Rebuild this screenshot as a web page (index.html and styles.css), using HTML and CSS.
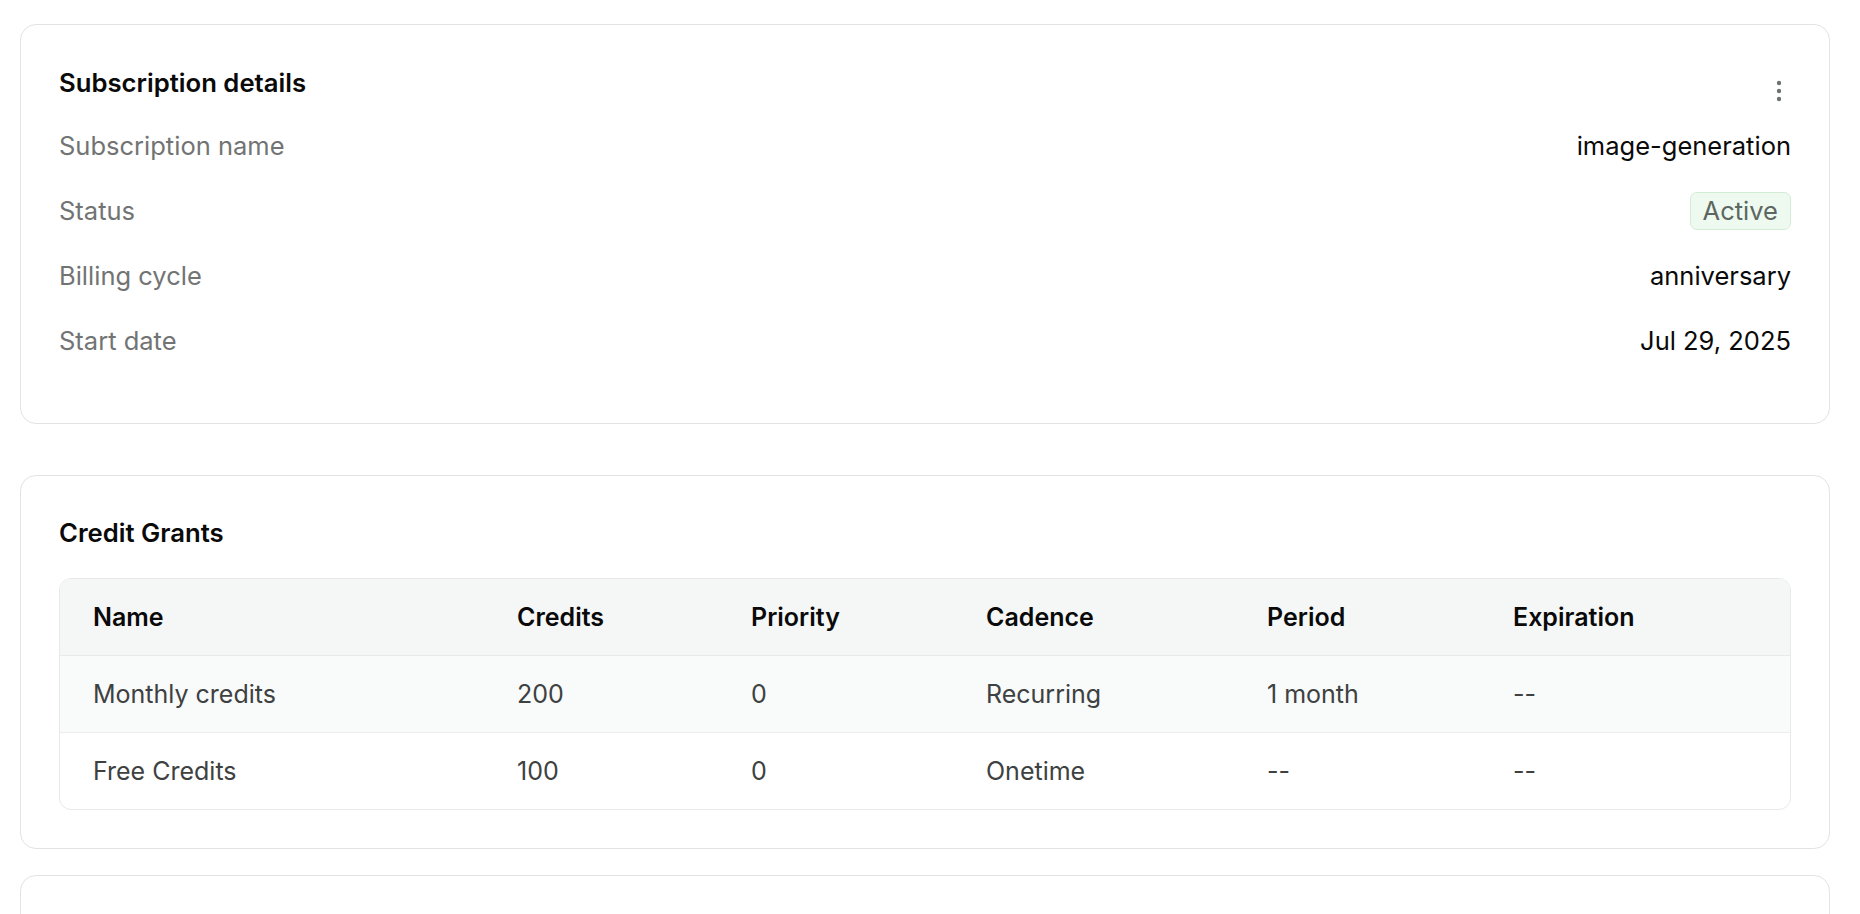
FILE: index.html
```html
<!DOCTYPE html>
<html lang="en">
<head>
<meta charset="utf-8">
<title>Subscription</title>
<link rel="stylesheet" href="styles.css">
</head>
<body>
<main class="page">
  <section class="card card-details">
    <div class="card-head">
      <h2 class="card-title">Subscription details</h2>
      <button class="kebab" type="button" aria-label="More actions">
        <svg width="24" height="32" viewBox="0 0 24 32" aria-hidden="true">
          <circle cx="12" cy="8" r="2.2"/>
          <circle cx="12" cy="16" r="2.2"/>
          <circle cx="12" cy="24" r="2.2"/>
        </svg>
      </button>
    </div>
    <dl class="rows">
      <div class="row"><dt>Subscription name</dt><dd>image-generation</dd></div>
      <div class="row"><dt>Status</dt><dd><span class="badge">Active</span></dd></div>
      <div class="row"><dt>Billing cycle</dt><dd>anniversary</dd></div>
      <div class="row"><dt>Start date</dt><dd>Jul 29, 2025</dd></div>
    </dl>
  </section>

  <section class="card card-grants">
    <h2 class="card-title">Credit Grants</h2>
    <div class="table-wrap">
      <table class="grants">
        <colgroup>
          <col class="c-name"><col class="c-credits"><col class="c-priority"><col class="c-cadence"><col class="c-period"><col class="c-exp">
        </colgroup>
        <thead>
          <tr><th>Name</th><th>Credits</th><th>Priority</th><th>Cadence</th><th>Period</th><th>Expiration</th></tr>
        </thead>
        <tbody>
          <tr class="hover"><td>Monthly credits</td><td>200</td><td>0</td><td>Recurring</td><td>1 month</td><td>--</td></tr>
          <tr><td>Free Credits</td><td>100</td><td>0</td><td>Onetime</td><td>--</td><td>--</td></tr>
        </tbody>
      </table>
    </div>
  </section>

  <section class="card card-more"></section>
</main>
</body>
</html>
```

FILE: styles.css
```css
* { box-sizing: border-box; }
html, body { margin: 0; padding: 0; background: #ffffff; }
body {
  font-family: Inter, "Liberation Sans", sans-serif;
  color: #0a0a0a;
  overflow: hidden;
}
.page {
  display: flex;
  flex-direction: column;
  padding: 24px 30px 0 20px;
}
.card {
  border: 1px solid #e2e3e3;
  border-radius: 16px;
  background: #fff;
}
.card-details {
  padding: 43px 38px 50px 38px;
  margin-bottom: 51px;
}
.card-grants {
  padding: 42px 38px 38px 38px;
  margin-bottom: 26px;
}
.card-more { height: 200px; }

.card-head {
  display: flex;
  justify-content: space-between;
  align-items: flex-start;
  margin-bottom: 6px;
}
.card-title {
  margin: 0;
  font-size: 25.7px;
  line-height: 30px;
  font-weight: 600;
  color: #0a0a0a;
}
.kebab {
  width: 24px;
  height: 32px;
  margin-top: 7px;
  padding: 0;
  border: 0;
  background: transparent;
  display: flex;
}
.kebab svg { fill: #6f7272; }

.rows { margin: 0; display: flex; flex-direction: column; }
.row {
  display: flex;
  justify-content: space-between;
  align-items: center;
  height: 65px;
  font-size: 25.5px;
}
.row dt { color: #727474; }
.row dd { margin: 0; color: #0a0a0a; }
.badge {
  display: inline-flex;
  align-items: center;
  height: 38px;
  padding: 0 12px;
  border: 1px solid #d3ecd6;
  background: #eefaef;
  border-radius: 7px;
  color: #5d6761;
}

.card-grants .card-title { margin-bottom: 30px; }
.table-wrap {
  border: 1px solid #e8eaea;
  border-radius: 12px;
  overflow: hidden;
}
.grants {
  width: 100%;
  border-collapse: collapse;
  table-layout: fixed;
  font-size: 25px;
}
.c-name { width: 424px; }
.c-credits { width: 234px; }
.c-priority { width: 235px; }
.c-cadence { width: 281px; }
.c-period { width: 246px; }
.grants th, .grants td {
  text-align: left;
  padding: 0 0 0 33px;
  height: 76.5px;
}
.grants thead tr { background: #f5f7f7; }
.grants th {
  font-weight: 600;
  color: #0a0a0a;
  border-bottom: 1px solid #e8eaea;
}
.grants td { color: #3e4141; }
.grants tbody tr.hover { background: #f9fafa; }
.grants tbody tr.hover td { border-bottom: 1px solid #eceeee; }
```
